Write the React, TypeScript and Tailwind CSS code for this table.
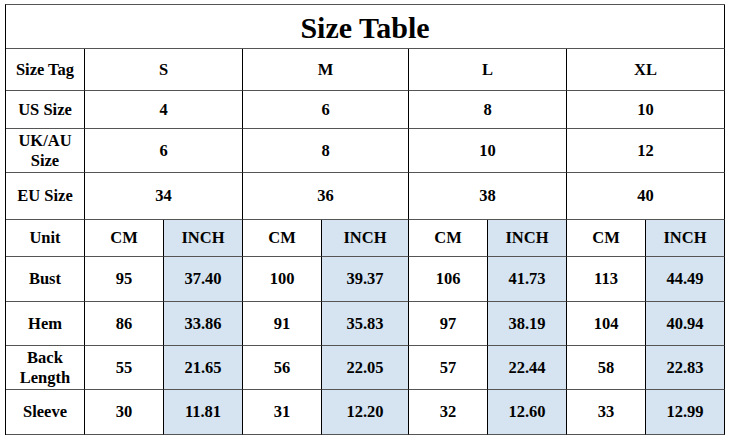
import React from 'react'

const sizes = [
  { label: 'Size Tag', vals: ['S', 'M', 'L', 'XL'] },
  { label: 'US Size', vals: ['4', '6', '8', '10'] },
  { label: 'UK/AU\nSize', vals: ['6', '8', '10', '12'] },
  { label: 'EU Size', vals: ['34', '36', '38', '40'] },
]

const measures = [
  { label: 'Bust', vals: ['95', '37.40', '100', '39.37', '106', '41.73', '113', '44.49'] },
  { label: 'Hem', vals: ['86', '33.86', '91', '35.83', '97', '38.19', '104', '40.94'] },
  { label: 'Back\nLength', vals: ['55', '21.65', '56', '22.05', '57', '22.44', '58', '22.83'] },
  { label: 'Sleeve', vals: ['30', '11.81', '31', '12.20', '32', '12.60', '33', '12.99'] },
]

const cell =
  'flex items-center justify-center text-center border-r border-b border-r-black border-b-[#555] leading-[20px] whitespace-pre-line'

export default function App() {
  return (
    <div
      className="w-[732px] h-[444px] bg-white pt-[4px] pl-[5px] text-black"
      style={{ fontFamily: '"Liberation Serif", "Times New Roman", serif' }}
    >
      <div className="grid w-[720px] grid-cols-[79px_79px_79px_79px_87px_79px_79px_79px_79px] grid-rows-[44px_42px_38px_44px_47px_37px_45px_44px_44px_45px] border-l border-t border-l-black border-t-[#555] text-[16.5px] font-bold">
        <div className={`${cell} col-span-9 text-[30px] pt-[2px]`}>Size Table</div>

        {sizes.map(row => (
          <React.Fragment key={row.label}>
            <div className={cell}>{row.label}</div>
            {row.vals.map((v, i) => (
              <div key={i} className={`${cell} col-span-2`}>
                {v}
              </div>
            ))}
          </React.Fragment>
        ))}

        <div className={cell}>Unit</div>
        {[0, 1, 2, 3].map(i => (
          <React.Fragment key={i}>
            <div className={cell}>CM</div>
            <div className={`${cell} bg-[#d6e4f1]`}>INCH</div>
          </React.Fragment>
        ))}

        {measures.map(row => (
          <React.Fragment key={row.label}>
            <div className={cell}>{row.label}</div>
            {row.vals.map((v, i) => (
              <div key={i} className={`${cell} ${i % 2 === 1 ? 'bg-[#d6e4f1]' : ''}`}>
                {v}
              </div>
            ))}
          </React.Fragment>
        ))}
      </div>
    </div>
  )
}
